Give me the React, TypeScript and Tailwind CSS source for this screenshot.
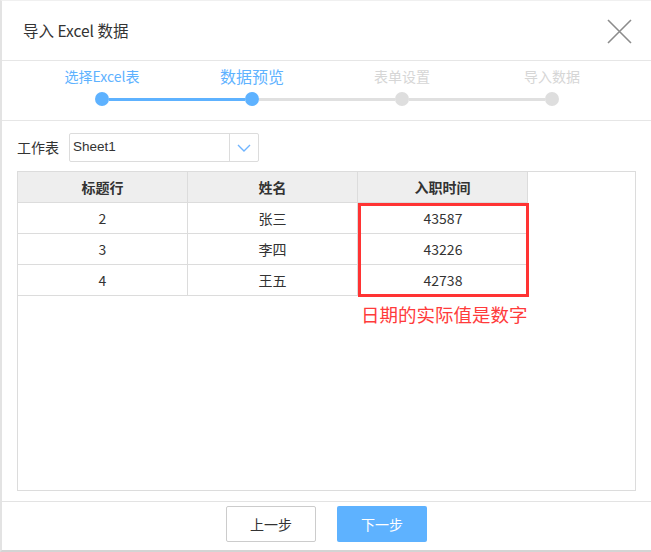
import React from "react";

const font = { fontFamily: '"Noto Sans CJK SC", "Noto Sans", sans-serif' };

const steps = [
  { label: "选择Excel表", state: "done" },
  { label: "数据预览", state: "active" },
  { label: "表单设置", state: "todo" },
  { label: "导入数据", state: "todo" },
];

const rows = [
  ["2", "张三", "43587"],
  ["3", "李四", "43226"],
  ["4", "王五", "42738"],
];

function Steps() {
  return (
    <div className="h-[60px] border-b border-[#e6e6e6] pt-[3px]">
      <div className="flex pl-[25px] h-[24px] items-center">
        {steps.map((s) => (
          <div
            key={s.label}
            className={
              s.state === "active"
                ? "w-[150px] text-center text-[16px] leading-[24px] text-[#5eb2ff]"
                : s.state === "done"
                ? "w-[150px] text-center text-[14px] leading-[24px] text-[#5eb2ff]"
                : "w-[150px] text-center text-[14px] leading-[24px] text-[#d6d6d6]"
            }
          >
            {s.label}
          </div>
        ))}
      </div>
      <div className="flex items-center pl-[93px] mt-[4px]">
        <span className="w-[14px] h-[14px] rounded-full bg-[#5eb2ff]" />
        <span className="w-[136px] h-[3px] bg-[#5eb2ff]" />
        <span className="w-[14px] h-[14px] rounded-full bg-[#5eb2ff]" />
        <span className="w-[136px] h-[3px] bg-[#e0e0e0]" />
        <span className="w-[14px] h-[14px] rounded-full bg-[#dedede]" />
        <span className="w-[136px] h-[3px] bg-[#e0e0e0]" />
        <span className="w-[14px] h-[14px] rounded-full bg-[#dedede]" />
      </div>
    </div>
  );
}

export default function App() {
  return (
    <div
      className="w-[651px] h-[552px] bg-white flex flex-col border-l-2 border-b-2 border-l-[#e3e3e3] border-b-[#d4d4d4] border-t border-t-[#f0f0f0] text-[#333]"
      style={font}
    >
      <div className="h-[60px] shrink-0 flex items-center justify-between border-b border-[#e6e6e6] pl-[21px] pr-[19px]">
        <span className="text-[15.5px] text-[#333]">导入 Excel 数据</span>
        <svg width="25" height="25" viewBox="0 0 25 25" className="mt-[1px]">
          <path d="M1 1 L24 24 M24 1 L1 24" stroke="#8c8c8c" strokeWidth="1.6" fill="none" />
        </svg>
      </div>

      <Steps />

      <div className="flex-1 flex flex-col px-[15px] pt-[12px] pb-[10px]">
        <div className="flex items-center h-[29px]">
          <span className="text-[14px] w-[52px]">工作表</span>
          <div className="flex w-[190px] h-[29px] border border-[#dcdcdc] rounded-[2px]">
            <div
              className="flex-1 flex items-center pl-[3px] text-[13.5px] text-[#333]"
              style={{ fontFamily: '"Liberation Sans", sans-serif' }}
            >
              Sheet1
            </div>
            <div className="w-[29px] border-l border-[#dcdcdc] flex items-center justify-center">
              <svg width="14" height="8" viewBox="0 0 14 8">
                <path d="M1 1 L7 7 L13 1" stroke="#6fb4ff" strokeWidth="1.4" fill="none" />
              </svg>
            </div>
          </div>
        </div>

        <div className="mt-[9px] flex-1 border border-[#dcdcdc] relative">
          <div className="grid grid-cols-[170px_170px_170px] w-[511px]">
            {["标题行", "姓名", "入职时间"].map((h) => (
              <div
                key={h}
                className="h-[31px] bg-[#eeeeee] border-r border-b border-[#dcdcdc] flex items-center justify-center text-[14px] font-bold text-[#333]"
              >
                {h}
              </div>
            ))}
            {rows.map((r) =>
              r.map((c, i) => (
                <div
                  key={r[0] + i}
                  className={
                    i === 2
                      ? "h-[31px] border-b border-[#dcdcdc] flex items-center justify-center text-[14px] text-[#333]"
                      : "h-[31px] border-r border-b border-[#dcdcdc] flex items-center justify-center text-[14px] text-[#333]"
                  }
                >
                  {c}
                </div>
              ))
            )}
          </div>
          <div className="absolute left-[340px] top-[31px] w-[171px] h-[94px] border-[3px] border-[#ff3333]" />
          <div className="absolute left-[343px] top-[130px] text-[18.5px] leading-[24px] text-[#ff3b3b] whitespace-nowrap">
            日期的实际值是数字
          </div>
        </div>
      </div>

      <div className="h-[49px] shrink-0 border-t border-[#e3e3e3] flex justify-center gap-[21px] pt-[4px]">
        <button className="w-[90px] h-[36px] border border-[#cccccc] rounded-[2px] bg-white text-[14px] text-[#333]">
          上一步
        </button>
        <button className="w-[90px] h-[36px] rounded-[2px] bg-[#5eb2ff] text-[14px] text-white">
          下一步
        </button>
      </div>
    </div>
  );
}
